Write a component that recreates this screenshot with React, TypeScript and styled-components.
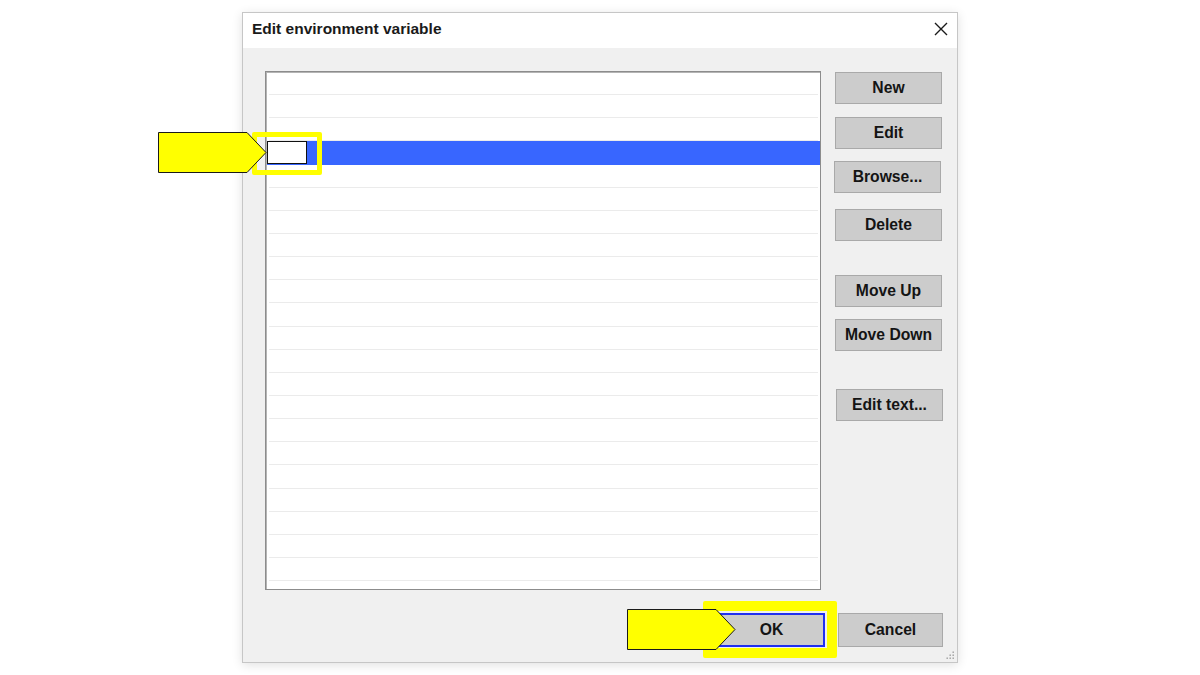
import styled, { createGlobalStyle } from "styled-components";

const GlobalStyle = createGlobalStyle`
  html, body {
    margin: 0;
    padding: 0;
    background: #ffffff;
    font-family: "Liberation Sans", Arial, sans-serif;
  }
`;

const Page = styled.div`
  position: relative;
  width: 1200px;
  height: 675px;
  display: flex;
  justify-content: center;
  align-items: flex-start;
  padding-top: 12px;
  box-sizing: border-box;
  overflow: hidden;
`;

const Dialog = styled.div`
  width: 716px;
  height: 651px;
  box-sizing: border-box;
  border: 1px solid #c6c6c6;
  background: #f0f0f0;
  box-shadow: 0 2px 10px rgba(0, 0, 0, 0.12);
  display: flex;
  flex-direction: column;
  position: relative;
`;

const TitleBar = styled.div`
  height: 35px;
  background: #ffffff;
  display: flex;
  align-items: center;
  justify-content: space-between;
  padding: 0 9px 4px 9px;
  box-sizing: border-box;
`;

const Title = styled.span`
  font-size: 15.5px;
  font-weight: 700;
  color: #1a1a1a;
`;

const CloseButton = styled.button`
  border: none;
  background: transparent;
  padding: 0;
  width: 20px;
  height: 20px;
  display: flex;
  align-items: center;
  justify-content: center;
  margin-right: -3px;
`;

const Content = styled.div`
  display: grid;
  grid-template-columns: 556px 107px;
  column-gap: 14px;
  padding: 23px 15px 0 22px;
`;

const ListBox = styled.div`
  height: 519px;
  box-sizing: border-box;
  background: #ffffff;
  border: 1px solid #8c8c8c;
  box-shadow: inset 1px 1px 0 #b4b4b4;
  overflow: hidden;
  padding-left: 1px;
`;

const Row = styled.div<{ $selected?: boolean }>`
  height: 23.15px;
  box-sizing: border-box;
  display: flex;
  align-items: stretch;
  background: ${({ $selected }) => ($selected ? "#3866ff" : "transparent")};
  border-bottom: 1px solid ${({ $selected }) => ($selected ? "#3866ff" : "#ebebeb")};
  margin: 0 ${({ $selected }) => ($selected ? "0" : "2px")};
`;

const EditField = styled.div`
  width: 40px;
  background: #ffffff;
  border: 1px solid #111111;
  box-sizing: border-box;
`;

const ButtonColumn = styled.div`
  display: flex;
  flex-direction: column;
`;

const SideButton = styled.button<{ $top: number; $shift?: number }>`
  margin-top: ${({ $top }) => $top}px;
  margin-left: ${({ $shift }) => $shift ?? 0}px;
  width: 107px;
  height: 32px;
  box-sizing: border-box;
  background: #cccccc;
  border: 1px solid #a9a9a9;
  font-family: "Liberation Sans", Arial, sans-serif;
  font-size: 15.7px;
  font-weight: 700;
  color: #141414;
  padding: 0;
`;

const Footer = styled.div`
  flex: 1;
  display: flex;
  justify-content: flex-end;
  align-items: flex-start;
  gap: 13px;
  padding: 23px 14px 0 0;
`;

const FooterButton = styled.button<{ $default?: boolean }>`
  width: ${({ $default }) => ($default ? "107px" : "105px")};
  height: 34px;
  box-sizing: border-box;
  background: #cccccc;
  border: ${({ $default }) => ($default ? "2px solid #1f2ff0" : "1px solid #a9a9a9")};
  font-family: "Liberation Sans", Arial, sans-serif;
  font-size: 15.7px;
  font-weight: 700;
  color: #141414;
  padding: 0;
`;

const Grip = styled.svg`
  position: absolute;
  right: 2px;
  bottom: 2px;
`;

const Highlight = styled.div<{ $x: number; $y: number; $w: number; $h: number; $b: number }>`
  position: absolute;
  left: ${({ $x }) => $x}px;
  top: ${({ $y }) => $y}px;
  width: ${({ $w }) => $w}px;
  height: ${({ $h }) => $h}px;
  box-sizing: border-box;
  border: ${({ $b }) => $b}px solid #ffff00;
  border-radius: 2px;
  pointer-events: none;
`;

const Arrow = styled.svg<{ $x: number; $y: number }>`
  position: absolute;
  left: ${({ $x }) => $x}px;
  top: ${({ $y }) => $y}px;
  overflow: visible;
`;

function PointerArrow({ x, y }: { x: number; y: number }) {
  return (
    <Arrow $x={x} $y={y} width="110" height="42" viewBox="0 0 110 42">
      <polygon
        points="0.5,0.5 89,0.5 108,20.5 89,40.5 0.5,40.5"
        fill="#ffff00"
        stroke="#1a1a1a"
        strokeWidth="1"
      />
    </Arrow>
  );
}

const ROWS = Array.from({ length: 23 }, (_, i) => i);

export default function App() {
  return (
    <Page>
      <GlobalStyle />
      <Dialog>
        <TitleBar>
          <Title>Edit environment variable</Title>
          <CloseButton>
            <svg width="16" height="16" viewBox="0 0 16 16">
              <path d="M2 2 L14 14 M14 2 L2 14" stroke="#1a1a1a" strokeWidth="1.4" />
            </svg>
          </CloseButton>
        </TitleBar>
        <Content>
          <ListBox>
            {ROWS.map((i) => (
              <Row key={i} $selected={i === 3}>
                {i === 3 && <EditField />}
              </Row>
            ))}
          </ListBox>
          <ButtonColumn>
            <SideButton $top={1}>New</SideButton>
            <SideButton $top={13}>Edit</SideButton>
            <SideButton $top={12} $shift={-1}>Browse...</SideButton>
            <SideButton $top={16}>Delete</SideButton>
            <SideButton $top={34}>Move Up</SideButton>
            <SideButton $top={12}>Move Down</SideButton>
            <SideButton $top={38} $shift={1}>Edit text...</SideButton>
          </ButtonColumn>
        </Content>
        <Footer>
          <FooterButton $default>OK</FooterButton>
          <FooterButton>Cancel</FooterButton>
        </Footer>
        <Grip width="10" height="10" viewBox="0 0 10 10">
          {[
            [8, 2],
            [5, 5],
            [8, 5],
            [2, 8],
            [5, 8],
            [8, 8],
          ].map(([cx, cy]) => (
            <rect key={`${cx}-${cy}`} x={cx - 0.5} y={cy - 0.5} width="1.4" height="1.4" fill="#9a9a9a" />
          ))}
        </Grip>
      </Dialog>
      <Highlight $x={252} $y={132} $w={70} $h={43} $b={5} />
      <PointerArrow x={158} y={132} />
      <Highlight $x={703} $y={601} $w={134} $h={57} $b={10} />
      <PointerArrow x={627} y={609} />
    </Page>
  );
}
